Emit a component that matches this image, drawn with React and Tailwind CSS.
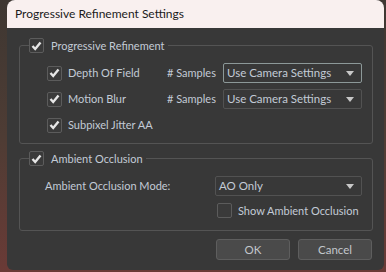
import React from "react";

const font = { fontFamily: 'Lato, "Noto Sans", sans-serif' };

const Check = ({ checked }) => (
  <div className="w-[15px] h-[15px] shrink-0 border border-[#5c5c5c] bg-[#3a3a3a] rounded-[2px] flex items-center justify-center">
    {checked && (
      <svg width="11" height="10" viewBox="0 0 11 10">
        <polyline points="1.5,5 4.2,8 9.5,1.5" fill="none" stroke="#e6e6e6" strokeWidth="2.4" />
      </svg>
    )}
  </div>
);

const Select = ({ value, focused, w }) => (
  <div
    className={
      "h-[20px] shrink-0 flex items-center justify-between pl-[3px] pr-[7px] rounded-[2px] bg-[#383838] border " +
      (focused ? "border-[#8c9898]" : "border-[#525252]") +
      " " + w
    }
  >
    <span className="text-[11.5px]">{value}</span>
    <svg width="8" height="5" viewBox="0 0 8 5">
      <polygon points="0,0 8,0 4,5" fill="#c8c8c8" />
    </svg>
  </div>
);

const SampleRow = ({ label, samples }) => (
  <div className="flex items-center h-[20px]">
    <Check checked />
    <span className="ml-[6px] w-[99px] shrink-0">{label}</span>
    {samples && (
      <>
        <span className="w-[56px] shrink-0">{samples.label}</span>
        <Select value={samples.value} focused={samples.focused} w="w-[139px]" />
      </>
    )}
  </div>
);

export default function App() {
  return (
    <div className="w-[386px] h-[272px] bg-gradient-to-b from-[#3e3732] via-[#4e3c34] to-[#6a3a36] overflow-hidden whitespace-nowrap" style={font}>
      <div className="ml-[7px] w-[377px] h-[270px] rounded-t-[8px] rounded-b-[6px] overflow-hidden bg-[#383838] flex flex-col text-[11px] text-[#c3cbd6]">
        <div className="h-[28px] shrink-0 bg-[#f9f0ef] flex items-center pl-[8px] text-[12px] text-[#1b1b1b]">
          Progressive Refinement Settings
        </div>

        <div className="px-[12px] pt-[10px]">
          <fieldset className="border border-[#545454] rounded-[3px] pl-[27px] pr-[10px] pt-[10px] pb-[8px]">
            <legend className="-ml-[18px] pr-[3px] flex items-center leading-[15px]">
              <Check checked />
              <span className="ml-[7px]">Progressive Refinement</span>
            </legend>
            <div className="flex flex-col gap-[6px]">
              <SampleRow label="Depth Of Field" samples={{ label: "# Samples", value: "Use Camera Settings", focused: true }} />
              <SampleRow label="Motion Blur" samples={{ label: "# Samples", value: "Use Camera Settings" }} />
              <SampleRow label="Subpixel Jitter AA" />
            </div>
          </fieldset>

          <fieldset className="mt-[7px] border border-[#545454] rounded-[3px] pl-[25px] pr-[10px] pt-[10px] pb-[12px]">
            <legend className="-ml-[16px] pr-[3px] flex items-center leading-[15px]">
              <Check checked />
              <span className="ml-[7px]">Ambient Occlusion</span>
            </legend>
            <div className="flex items-center h-[20px]">
              <span className="w-[170px] shrink-0">Ambient Occlusion Mode:</span>
              <Select value="AO Only" w="w-[147px]" />
            </div>
            <div className="flex items-center mt-[7px] ml-[172px] leading-[15px]">
              <Check />
              <span className="ml-[6px]">Show Ambient Occlusion</span>
            </div>
          </fieldset>

          <div className="flex justify-end gap-[8px] mt-[8px]">
            <button className="w-[74px] h-[21px] rounded-[3px] bg-[#4a4a4a] border border-[#5e5e5e] text-[#c3c7cc] text-[11.5px]">OK</button>
            <button className="w-[74px] h-[21px] rounded-[3px] bg-[#4a4a4a] border border-[#5e5e5e] text-[#c3c7cc] text-[11.5px]">Cancel</button>
          </div>
        </div>
      </div>
    </div>
  );
}
